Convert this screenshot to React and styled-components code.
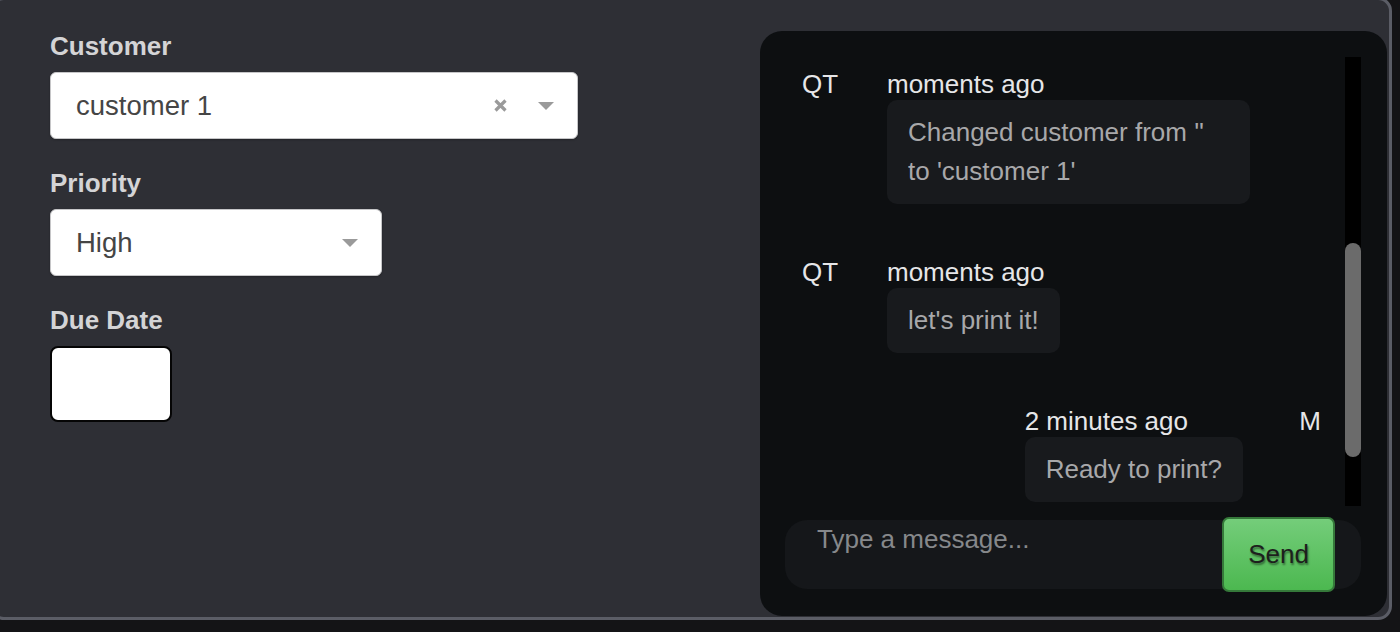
import React from "react";
import styled, { createGlobalStyle } from "styled-components";

const GlobalStyle = createGlobalStyle`
  html, body {
    margin: 0;
    padding: 0;
    background: #141416;
    overflow: hidden;
  }
  * { box-sizing: border-box; }
  body {
    font-family: "Liberation Sans", Arial, Helvetica, sans-serif;
  }
`;

const Page = styled.div`
  width: 1400px;
  height: 632px;
  background: #141416;
  overflow: hidden;
`;

const Panel = styled.div`
  margin: -3px 0 0 -10px;
  width: 1402px;
  height: 623px;
  background: #2e2f35;
  border: 3px solid #5b5d66;
  border-radius: 14px;
  padding: 31px 2px 1px 57px;
  display: flex;
  justify-content: space-between;
  align-items: flex-start;
`;

const Form = styled.div`
  display: flex;
  flex-direction: column;
`;

const Field = styled.div`
  display: flex;
  flex-direction: column;
  margin-bottom: 29px;
`;

const Label = styled.label`
  font-size: 26px;
  line-height: 31px;
  font-weight: 700;
  color: #d4d4d6;
  margin-bottom: 10px;
`;

const SelectBox = styled.div`
  width: ${(p) => p.$width}px;
  height: 67px;
  background: #fff;
  border: 1px solid #c6c6c8;
  border-radius: 6px;
  box-shadow: 0 1px 2px rgba(0, 0, 0, 0.25);
  display: flex;
  align-items: center;
  padding-left: 25px;
`;

const SelectValue = styled.span`
  flex: 1;
  font-size: 27.5px;
  color: #454545;
`;

const ClearBox = styled.span`
  width: 30px;
  display: flex;
  justify-content: center;
  align-items: center;
`;

const ArrowBox = styled.span`
  width: 62px;
  display: flex;
  justify-content: center;
  align-items: center;
`;

const DateInput = styled.input`
  width: 122px;
  height: 76px;
  background: #fff;
  border: 2px solid #050505;
  border-radius: 8px;
  outline: none;
  padding: 0 10px;
  font-family: inherit;
  font-size: 22px;
`;

const Chat = styled.div`
  width: 627px;
  height: 585px;
  background: #0d0f11;
  border-radius: 22px;
  padding: 26px 26px 27px 25px;
  display: flex;
  flex-direction: column;
  gap: 14px;
`;

const MessagesArea = styled.div`
  height: 449px;
  flex-shrink: 0;
  display: flex;
`;

const List = styled.div`
  flex: 1;
  overflow: hidden;
  padding-top: 12px;
`;

const ScrollTrack = styled.div`
  width: 16px;
  flex-shrink: 0;
  background: #000;
`;

const ScrollThumb = styled.div`
  height: 214px;
  margin-top: 186px;
  border-radius: 8px;
  background: #6b6b6b;
`;

const Row = styled.div`
  display: flex;
  flex-direction: ${(p) => (p.$mine ? "row-reverse" : "row")};
  align-items: flex-start;
  gap: 32px;
  margin-bottom: 53px;
  &:last-child {
    margin-bottom: 0;
  }
`;

const Avatar = styled.div`
  width: 70px;
  flex-shrink: 0;
  text-align: center;
  font-size: 26px;
  line-height: 31px;
  color: #e6e6e8;
`;

const Body = styled.div`
  display: flex;
  flex-direction: column;
  align-items: flex-start;
`;

const Meta = styled.div`
  font-size: 26px;
  line-height: 31px;
  color: #e6e6e8;
`;

const Bubble = styled.div`
  max-width: 363px;
  background: #181a1d;
  border-radius: 10px;
  padding: 13px 21px;
  font-size: 26px;
  line-height: 39px;
  color: #a8a8aa;
`;

const InputBar = styled.div`
  height: 69px;
  flex-shrink: 0;
  background: #15171a;
  border-radius: 22px;
  display: flex;
  align-items: center;
  padding-right: 26px;
`;

const MessageInput = styled.textarea`
  flex: 1;
  align-self: stretch;
  background: transparent;
  border: none;
  outline: none;
  resize: none;
  padding: 4px 0 0 32px;
  font-family: inherit;
  font-size: 26px;
  line-height: 30px;
  color: #e0e0e0;
  &::placeholder {
    color: #86888b;
  }
`;

const SendButton = styled.button`
  width: 113px;
  height: 75px;
  flex-shrink: 0;
  border: 2px solid #35793a;
  border-radius: 7px;
  background: linear-gradient(#74cd7a, #4cb850);
  font-family: inherit;
  font-size: 26px;
  color: #1d1f1d;
  text-shadow: 1px 2px 2px rgba(0, 0, 0, 0.45);
  cursor: pointer;
  padding: 0;
`;

const ClearIcon = () => (
  <svg width="15" height="15" viewBox="0 0 15 15">
    <path d="M2.5 2.5 L12.5 12.5 M12.5 2.5 L2.5 12.5" stroke="#9a9a9a" strokeWidth="3.2" />
  </svg>
);

const ArrowIcon = () => (
  <svg width="16" height="8" viewBox="0 0 16 8">
    <path d="M0 0 H16 L8 8 Z" fill="#9a9a9a" />
  </svg>
);

const messages = [
  { id: 3, who: "QT", time: "moments ago", text: "Changed customer from '' to 'customer 1'" },
  { id: 4, who: "QT", time: "moments ago", text: "let's print it!" },
  { id: 5, who: "M", mine: true, time: "2 minutes ago", text: "Ready to print?" },
];

export default function App() {
  return (
    <Page>
      <GlobalStyle />
      <Panel>
        <Form>
          <Field>
            <Label>Customer</Label>
            <SelectBox $width={528}>
              <SelectValue>customer 1</SelectValue>
              <ClearBox>
                <ClearIcon />
              </ClearBox>
              <ArrowBox>
                <ArrowIcon />
              </ArrowBox>
            </SelectBox>
          </Field>
          <Field>
            <Label>Priority</Label>
            <SelectBox $width={332}>
              <SelectValue>High</SelectValue>
              <ArrowBox>
                <ArrowIcon />
              </ArrowBox>
            </SelectBox>
          </Field>
          <Field>
            <Label>Due Date</Label>
            <DateInput type="text" defaultValue="" />
          </Field>
        </Form>
        <Chat>
          <MessagesArea>
            <List>
              {messages.map((m) => (
                <Row key={m.id} $mine={m.mine}>
                  <Avatar>{m.who}</Avatar>
                  <Body>
                    <Meta>{m.time}</Meta>
                    <Bubble>{m.text}</Bubble>
                  </Body>
                </Row>
              ))}
            </List>
            <ScrollTrack>
              <ScrollThumb />
            </ScrollTrack>
          </MessagesArea>
          <InputBar>
            <MessageInput placeholder="Type a message..." rows={1} />
            <SendButton>Send</SendButton>
          </InputBar>
        </Chat>
      </Panel>
    </Page>
  );
}
